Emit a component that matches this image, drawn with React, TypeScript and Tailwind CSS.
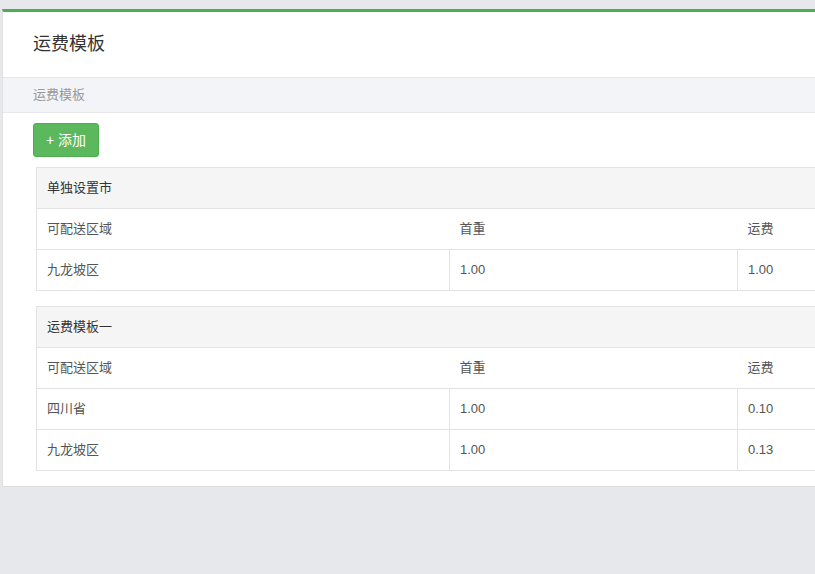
import React from 'react';

type Row = { area: string; weight: string; fee: string };

const tables: { name: string; rows: Row[] }[] = [
  { name: '单独设置市', rows: [{ area: '九龙坡区', weight: '1.00', fee: '1.00' }] },
  {
    name: '运费模板一',
    rows: [
      { area: '四川省', weight: '1.00', fee: '0.10' },
      { area: '九龙坡区', weight: '1.00', fee: '0.13' },
    ],
  },
];

const FeeTable: React.FC<{ name: string; rows: Row[] }> = ({ name, rows }) => (
  <table className="w-[1000px] border-collapse border border-[#e3e3e3] text-[13px] text-[#555]">
    <thead>
      <tr className="bg-[#f5f5f5]">
        <th colSpan={3} className="h-[41px] px-[10px] text-left font-normal text-[#333] border-b border-[#e3e3e3]">
          {name}
        </th>
      </tr>
    </thead>
    <tbody>
      <tr>
        <td className="w-[413px] h-[41px] px-[10px] border-b border-[#e3e3e3]">可配送区域</td>
        <td className="w-[288px] h-[41px] px-[10px] border-b border-[#e3e3e3]">首重</td>
        <td className="h-[41px] px-[10px] border-b border-[#e3e3e3]">运费</td>
      </tr>
      {rows.map((r, i) => (
        <tr key={i}>
          <td className="h-[41px] px-[10px] border border-[#e3e3e3]">{r.area}</td>
          <td className="h-[41px] px-[10px] border border-[#e3e3e3]">{r.weight}</td>
          <td className="h-[41px] px-[10px] border border-[#e3e3e3]">{r.fee}</td>
        </tr>
      ))}
    </tbody>
  </table>
);

export default function App() {
  return (
    <div
      className="w-[815px] h-[574px] overflow-hidden bg-[#e7e8eb] pt-[9px] pl-[2px]"
      style={{ fontFamily: '"Liberation Sans", "Noto Sans CJK SC", sans-serif' }}
    >
      <div className="w-[1100px] bg-white border-t-[3px] border-[#4cae4c] border-l border-l-[#e0e0e0] border-b border-b-[#dcdcdc]">
        <div className="h-[65px] flex items-center px-[30px]">
          <h1 className="text-[18px] text-[#333] font-normal">运费模板</h1>
        </div>
        <div className="h-[36px] flex items-center px-[30px] bg-[#f3f4f7] border-y border-[#e7e7eb] text-[13px] text-[#999]">
          运费模板
        </div>
        <div className="pt-[10px] pl-[30px]">
          <button className="h-[34px] px-[12px] rounded-[3px] bg-[#5cb85c] border border-[#4cae4c] text-white text-[14px]">
            + 添加
          </button>
        </div>
        <div className="pt-[10px] pl-[33px] pb-[15px] flex flex-col gap-[15px]">
          {tables.map((t, i) => (
            <FeeTable key={i} name={t.name} rows={t.rows} />
          ))}
        </div>
      </div>
    </div>
  );
}
